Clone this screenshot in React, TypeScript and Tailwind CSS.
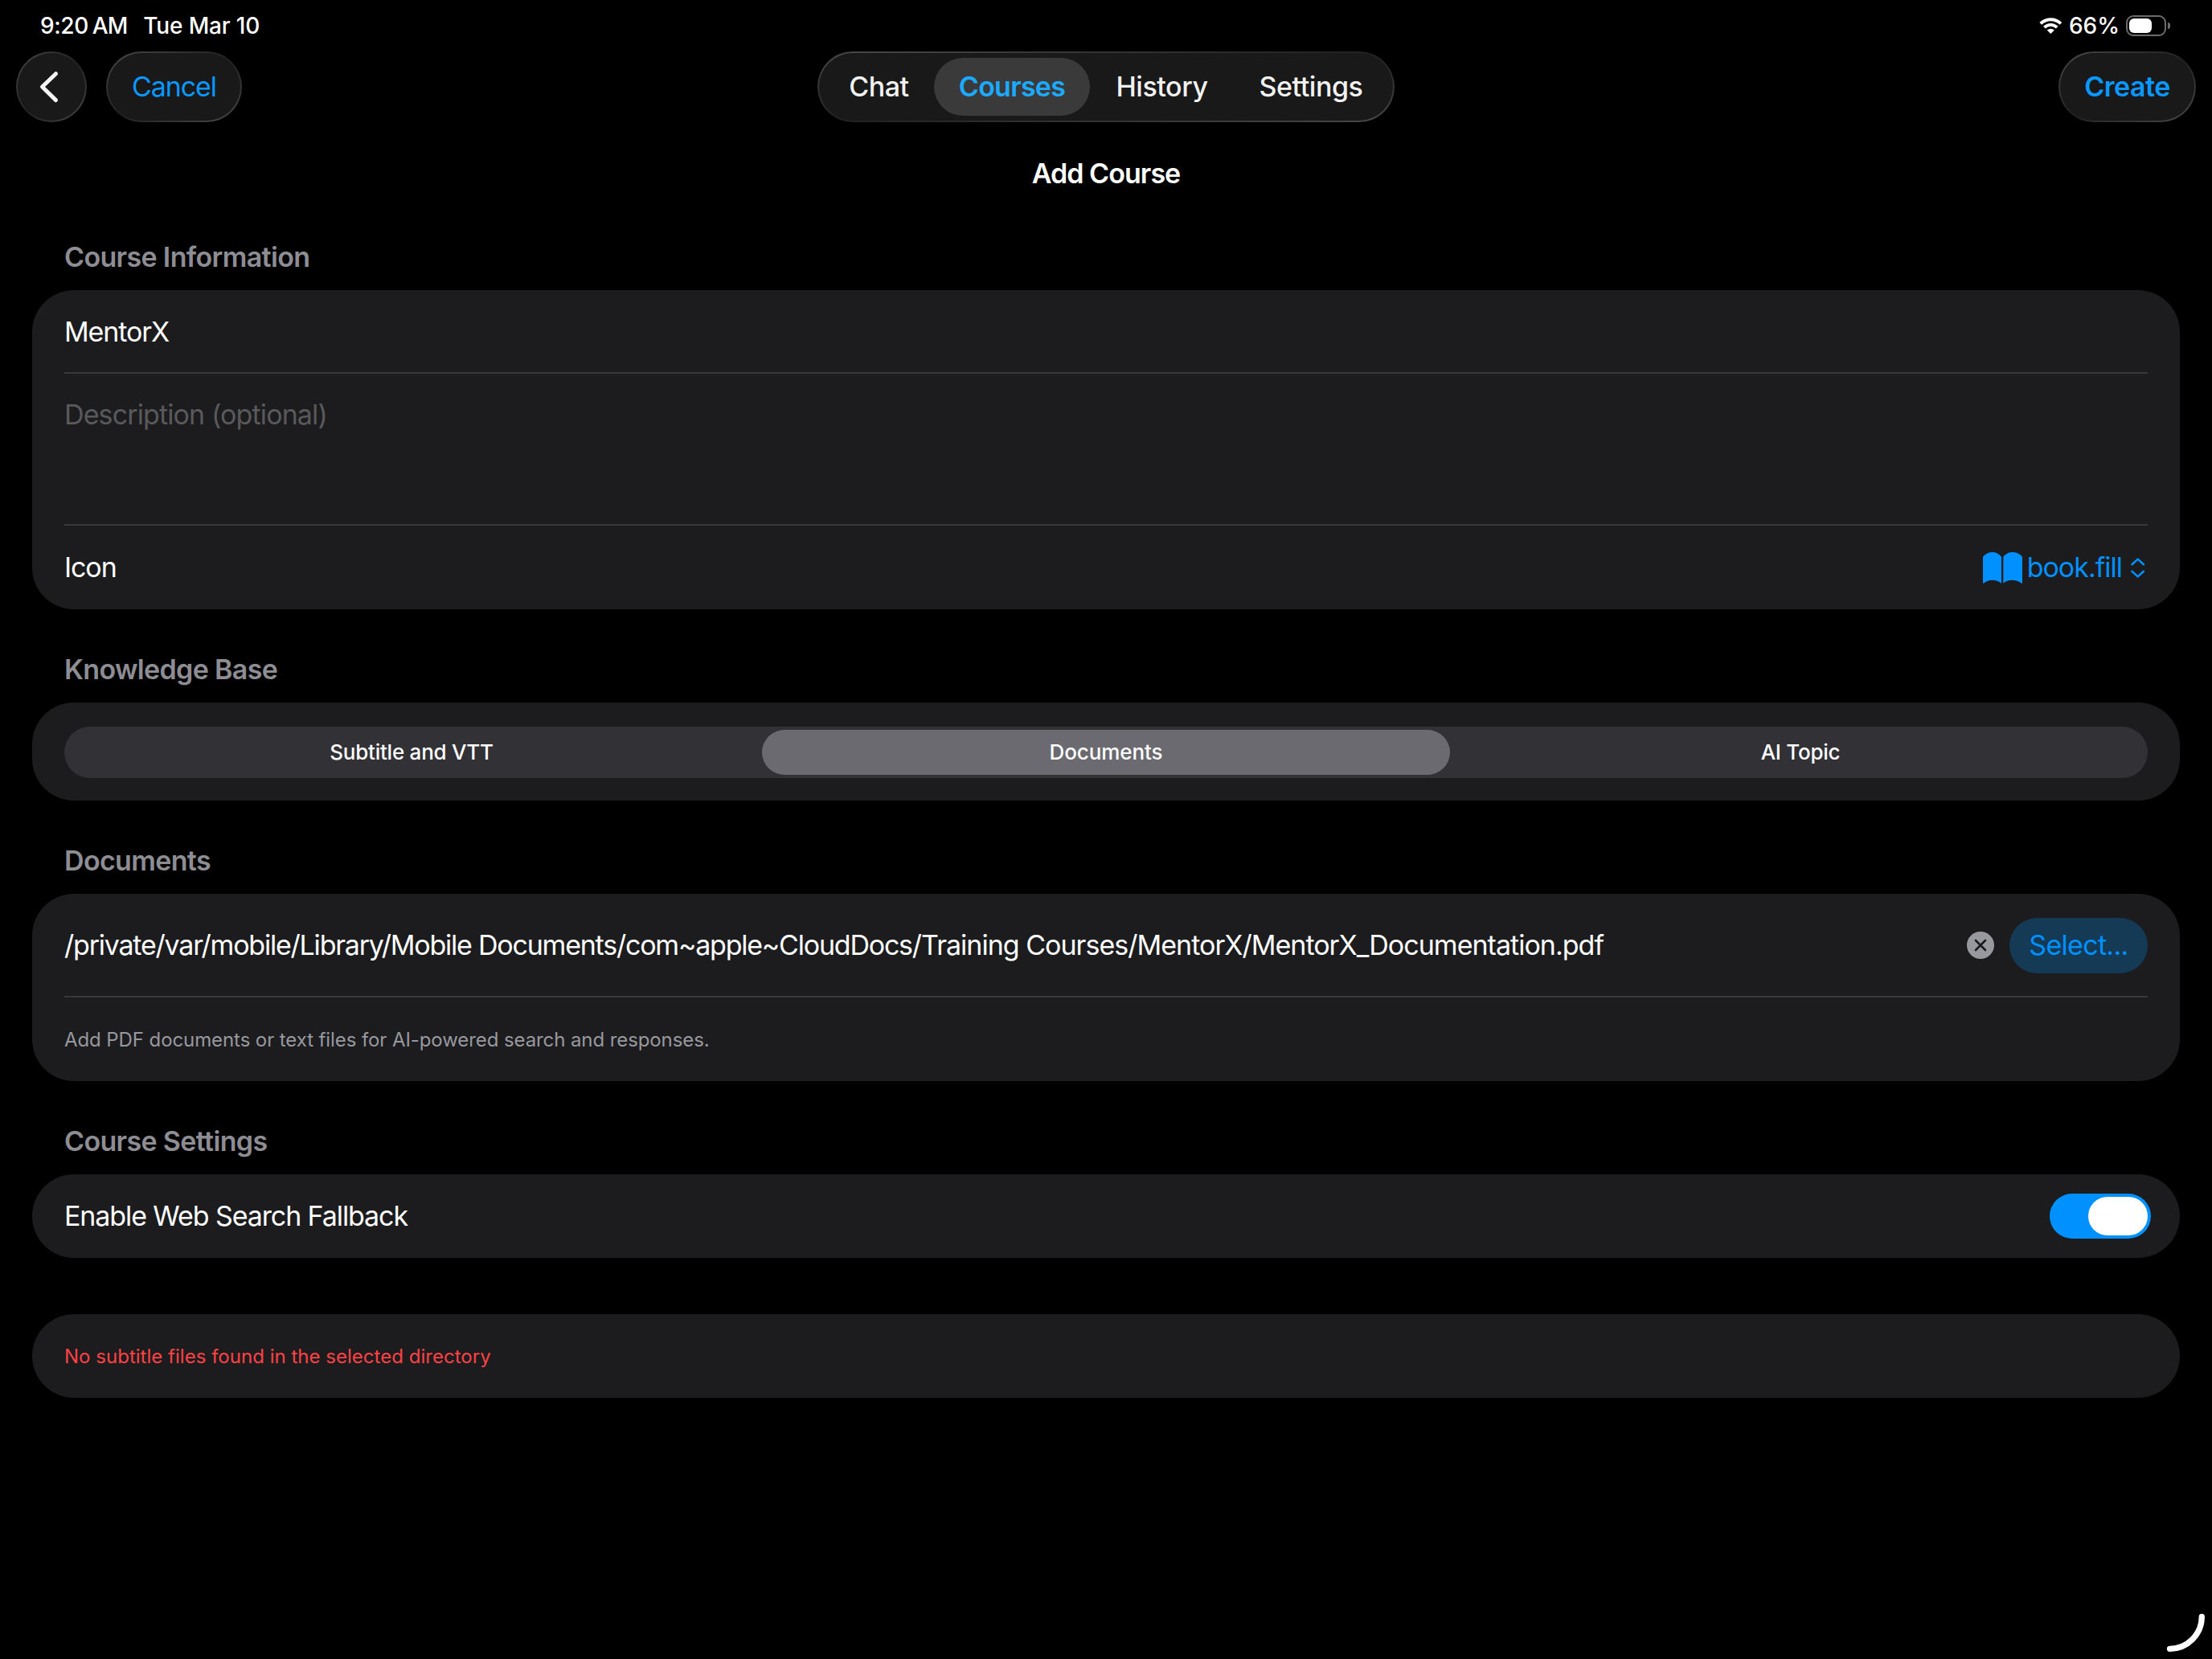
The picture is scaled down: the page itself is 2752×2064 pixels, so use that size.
import React from "react";

const tabs = [
    { label: "Chat", width: "w-[137px]" },
    { label: "Courses", width: "w-[194px]" },
    { label: "History", width: "w-[179px]" },
    { label: "Settings", width: "w-[192px]" },
];

const sources = ["Subtitle and VTT", "Documents", "AI Topic"];

const glass =
    "flex h-[88px] items-center justify-center rounded-full border-2 border-transparent [background:linear-gradient(#191919,#191919)_padding-box,linear-gradient(to_bottom_right,#484848,#202020_50%,#484848)_border-box]";

function Section({ title, children }: { title: string; children: React.ReactNode }) {
    return (
        <section className="mb-[55px]">
            <h2 className="mb-[21px] ml-10 text-[34px] leading-10 font-semibold tracking-[-0.65px] text-[#8d8d93]">{title}</h2>
            <div className="rounded-[52px] bg-[#1c1c1e] px-10">{children}</div>
        </section>
    );
}

function StatusBar() {
    return (
        <div className="flex h-16 items-center justify-between pr-[52px] pl-[50px] text-[28px] leading-8 font-medium">
            <div className="flex">
                <span className="tracking-[-0.4px]">9:20</span>
                <span className="ml-[5px] tracking-[-1px]">AM</span>
                <span className="ml-5 tracking-[-0.15px]">Tue Mar 10</span>
            </div>
            <div className="flex items-center gap-2">
                <svg width="29" height="20" viewBox="260 65 87 61" fill="none" stroke="white" strokeWidth="12">
                    <path d="M264.8 87.8A54 54 0 0 1 341.2 87.8" />
                    <path d="M279 102A34 34 0 0 1 327 102" />
                    <path d="M303 126L289 112.5Q303 101 317 112.5Z" fill="white" stroke="none" />
                </svg>
                <span>66%</span>
                <div className="flex items-center gap-0.5">
                    <div className="h-[26px] w-[50px] rounded-[9px] border-2 border-[#6b6b6b] p-0.5">
                        <div className="h-[18px] w-7 rounded-md bg-white"></div>
                    </div>
                    <div className="h-2 w-[3px] rounded-r-full bg-[#6b6b6b]"></div>
                </div>
            </div>
        </div>
    );
}

function NavBar() {
    return (
        <header className="grid grid-cols-[1fr_auto_1fr] px-5 text-[34px]">
            <div className="flex gap-6">
                <button className={`${glass} w-[88px]`}>
                    <svg width="84" height="84" viewBox="2 2 84 84" fill="none" stroke="#f4f4f4" strokeWidth="5" strokeLinecap="round" strokeLinejoin="round">
                        <path d="M49.5 27.7L32.5 44L49.5 60.6" />
                    </svg>
                </button>
                <button className={`${glass} w-[169px] pb-px tracking-[-1.1px] text-[#0a98ff]`}>Cancel</button>
            </div>
            <nav className={`${glass} px-1.5 font-medium text-[#f2f2f2]`}>
                {tabs.map((tab) => (
                    <a
                        key={tab.label}
                        className={`flex h-[72px] items-center justify-center rounded-full pb-px ${tab.width} ${
                            tab.label === "Courses" ? "bg-[#3a3a3a] font-semibold tracking-[-0.75px] text-[#1caaff]" : "tracking-[-0.45px]"
                        }`}
                    >
                        {tab.label}
                    </a>
                ))}
            </nav>
            <div className="flex justify-end">
                <button className={`${glass} w-[171px] pb-px font-semibold tracking-[-0.5px] text-[#0a98ff]`}>Create</button>
            </div>
        </header>
    );
}

export default function App() {
    return (
        <div className="relative h-[2064px] w-[2752px] overflow-hidden bg-black font-['Inter',sans-serif] text-white">
            <StatusBar />
            <NavBar />
            <h1 className="flex h-[148px] items-center justify-center pb-[22px] text-[34px] font-semibold tracking-[-0.95px]">Add Course</h1>

            <main className="px-10 text-[34px] leading-10 tracking-[-0.88px]">
                <Section title="Course Information">
                    <div className="flex h-26 items-center border-b-2 border-[#38383a] pt-0.5 tracking-[-1.1px]">MentorX</div>
                    <div className="h-[189px] border-b-2 border-[#38383a] pt-[31px] text-[#59595c]">Description (optional)</div>
                    <div className="flex h-26 items-center justify-between">
                        <span className="tracking-[-1.1px]">Icon</span>
                        <div className="flex items-center pr-0.5 text-[#0091ff]">
                            <svg width="49" height="39" viewBox="261 202 147 117" fill="currentColor">
                                <path d="M261 219Q275 202 296 202Q317 202 330 219V318Q315 306 296 306Q277 306 264 318Q261 319 261 316Z" />
                                <path d="M337 219Q350 202 371 202Q395 202 408 219V316Q408 319 405 318Q390 306 369 306Q350 306 337 318Z" />
                            </svg>
                            <span className="ml-1.5 tracking-[-1px]">book.fill</span>
                            <svg className="ml-2.5" width="20" height="27" viewBox="810 218 60 82" fill="none" stroke="currentColor" strokeWidth="8" strokeLinecap="round" strokeLinejoin="round">
                                <path d="M817 246L839 226L861 246" />
                                <path d="M817 272L839 292L861 272" />
                            </svg>
                        </div>
                    </div>
                </Section>

                <Section title="Knowledge Base">
                    <div className="pt-[30px] pb-7">
                        <div className="grid h-16 grid-cols-3 rounded-full bg-[#323136] text-[26px] leading-8">
                            {sources.map((source) => (
                                <div
                                    key={source}
                                    className={`m-1 flex items-center justify-center rounded-full ${
                                        source === "Documents" ? "bg-[#6b6a70] font-[550] tracking-[-0.1px]" : "font-[450] tracking-[-0.25px]"
                                    }`}
                                >
                                    {source}
                                </div>
                            ))}
                        </div>
                    </div>
                </Section>

                <Section title="Documents">
                    <div className="flex h-[129px] items-center border-b-2 border-[#38383a] pt-px">
                        <p className="flex-1">
                            <span className="tracking-[-1.22px]">/private/var/mobile/Library/Mobile Documents/com~apple~CloudDocs</span>
                            <span className="tracking-[-0.98px]">/Training Courses/MentorX/MentorX_Documentation.pdf</span>
                        </p>
                        <svg className="mr-[19px]" width="34" height="34" viewBox="0 0 34 34">
                            <circle cx="17" cy="17" r="17" fill="#98989f" />
                            <path d="M11 11L23 23M23 11L11 23" stroke="#1c1c1e" strokeWidth="2.6" strokeLinecap="round" />
                        </svg>
                        <button className="flex h-[69px] w-[172px] items-center justify-center rounded-full bg-[#153a56] pb-px tracking-[-0.7px] text-[#0091ff]">
                            Select...
                        </button>
                    </div>
                    <p className="flex h-26 items-center pt-0.5 text-[24px] tracking-[-0.09px] text-[#98989f]">
                        Add PDF documents or text files for AI-powered search and responses.
                    </p>
                </Section>

                <Section title="Course Settings">
                    <div className="flex h-26 items-center justify-between">
                        <span className="tracking-[-1.1px]">Enable Web Search Fallback</span>
                        <div className="-mr-1 flex h-14 w-[126px] justify-end rounded-full bg-[#0091ff] p-1">
                            <div className="h-12 w-[74px] rounded-full bg-white"></div>
                        </div>
                    </div>
                </Section>

                <div className="mt-[70px] flex h-26 items-center rounded-[52px] bg-[#1c1c1e] px-10 pt-0.5 text-[24px] tracking-[0.02px] text-[#ff4245]">
                    No subtitle files found in the selected directory
                </div>
            </main>

            {/* corner swipe handle */}
            <svg className="absolute right-0 bottom-0" width="100" height="100" viewBox="0 0 100 100" fill="none" stroke="white" strokeWidth="7.3" strokeLinecap="round">
                <path d="M47.5 87.3A40 40 0 0 0 87.3 47.5" />
            </svg>
        </div>
    );
}
